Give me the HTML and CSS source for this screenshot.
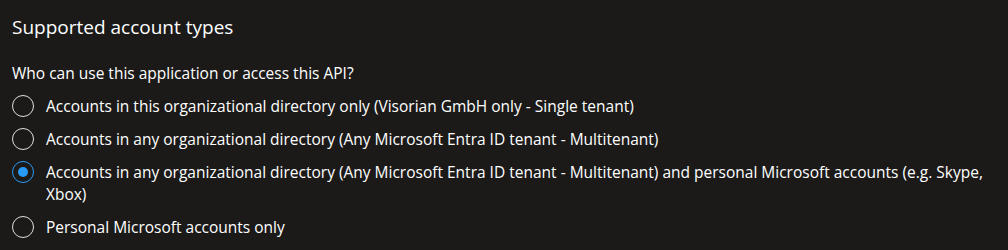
FILE: index.html
```html
<!DOCTYPE html>
<html>
<head>
<meta charset="utf-8">
<link rel="stylesheet" href="styles.css">
</head>
<body>
<section class="panel">
  <h2 class="title">Supported account types</h2>
  <div class="question">Who can use this application or access this API?</div>
  <div class="options" role="radiogroup">
    <label class="option"><span class="radio"></span><span class="label">Accounts in this organizational directory only (Visorian GmbH only - Single tenant)</span></label>
    <label class="option"><span class="radio"></span><span class="label">Accounts in any organizational directory (Any Microsoft Entra ID tenant - Multitenant)</span></label>
    <label class="option checked"><span class="radio"></span><span class="label">Accounts in any organizational directory (Any Microsoft Entra ID tenant - Multitenant) and personal Microsoft accounts (e.g. Skype, Xbox)</span></label>
    <label class="option"><span class="radio"></span><span class="label">Personal Microsoft accounts only</span></label>
  </div>
</section>
</body>
</html>
```
FILE: styles.css
```css
html, body {
  margin: 0;
  padding: 0;
  background: #1b1a19;
}
body {
  width: 1008px;
  height: 250px;
  overflow: hidden;
  font-family: "Open Sans", "Noto Sans", sans-serif;
  color: #ffffff;
}
.panel {
  padding: 13px 12px 0 12px;
  display: flex;
  flex-direction: column;
}
.title {
  margin: 0;
  font-size: 19px;
  font-weight: 400;
  line-height: 28px;
}
.question {
  margin-top: 21px;
  font-size: 15.5px;
  line-height: 22px;
}
.options {
  margin-top: 11px;
  display: flex;
  flex-direction: column;
  gap: 11px;
}
.option {
  display: flex;
  align-items: flex-start;
  gap: 12px;
  font-size: 15.5px;
  line-height: 22px;
}
.radio {
  flex: none;
  box-sizing: border-box;
  width: 22px;
  height: 22px;
  border: 1.5px solid #e1dfdd;
  border-radius: 50%;
  display: flex;
  align-items: center;
  justify-content: center;
}
.checked .radio {
  border-color: #2899f5;
}
.checked .radio::after {
  content: "";
  width: 10px;
  height: 10px;
  border-radius: 50%;
  background: #2899f5;
}
.label {
  flex: 1;
}
```
